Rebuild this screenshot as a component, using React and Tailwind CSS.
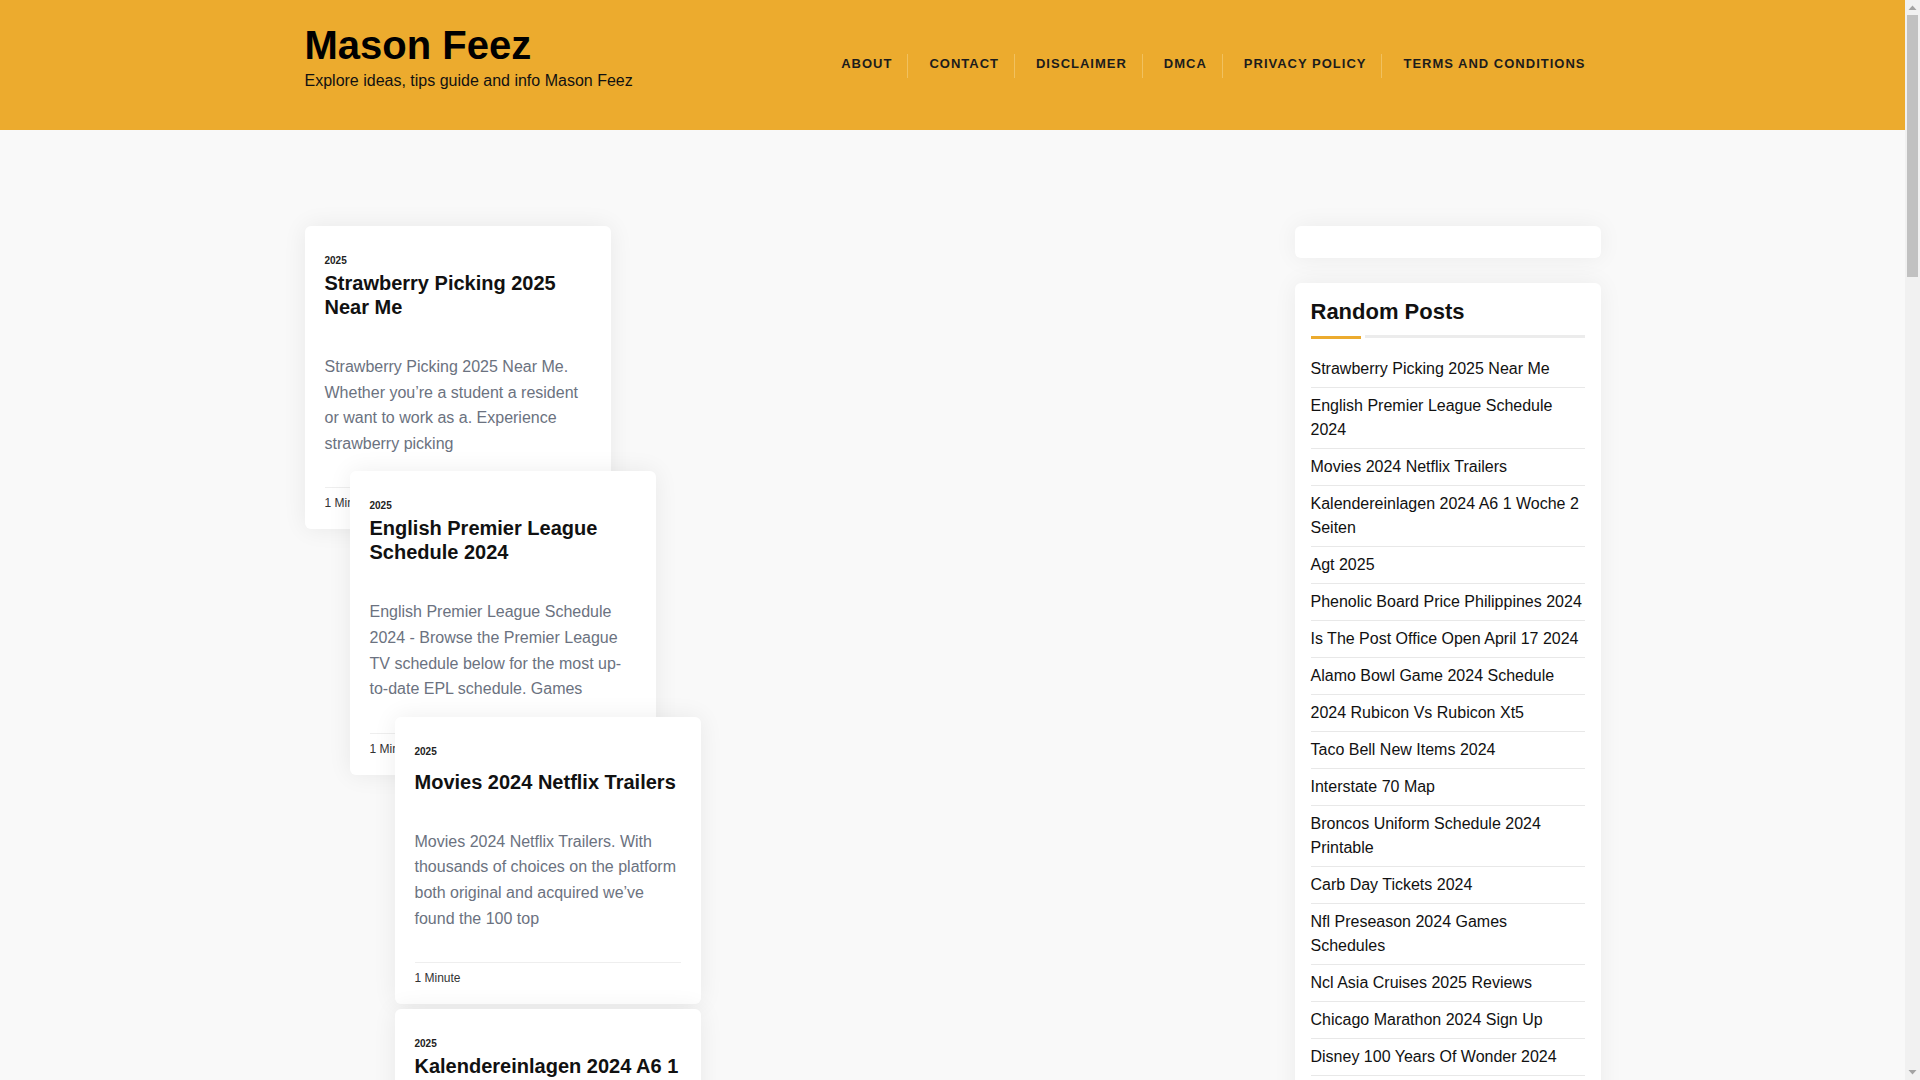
import React from 'react';

const navItems = ['About', 'Contact', 'Disclaimer', 'DMCA', 'Privacy Policy', 'Terms and Conditions'];

const posts = [
  {
    id: 1,
    title: 'Strawberry Picking 2025 Near Me',
    excerpt:
      'Strawberry Picking 2025 Near Me. Whether you’re a student a resident or want to work as a. Experience strawberry picking',
    shift: 'ml-0',
    titleGap: 'mt-[3px]',
  },
  {
    id: 2,
    title: 'English Premier League Schedule 2024',
    excerpt:
      'English Premier League Schedule 2024 - Browse the Premier League TV schedule below for the most up-to-date EPL schedule. Games',
    shift: 'ml-[45px] -mt-[58px]',
    titleGap: 'mt-[3px]',
  },
  {
    id: 3,
    title: 'Movies 2024 Netflix Trailers',
    excerpt:
      'Movies 2024 Netflix Trailers. With thousands of choices on the platform both original and acquired we’ve found the 100 top',
    shift: 'ml-[90px] -mt-[58px]',
    titleGap: 'mt-[11px]',
  },
  {
    id: 4,
    title: 'Kalendereinlagen 2024 A6 1 Woche 2 Seiten',
    excerpt:
      'Kalendereinlagen 2024 A6 1 Woche 2 Seiten. Kalendereinlagen für das neue Jahr zum Ausdrucken und Einlegen in den Planer',
    shift: 'ml-[90px] mt-[5px]',
    titleGap: 'mt-[3px]',
  },
];

const randomPosts = [
  'Strawberry Picking 2025 Near Me',
  'English Premier League Schedule 2024',
  'Movies 2024 Netflix Trailers',
  'Kalendereinlagen 2024 A6 1 Woche 2 Seiten',
  'Agt 2025',
  'Phenolic Board Price Philippines 2024',
  'Is The Post Office Open April 17 2024',
  'Alamo Bowl Game 2024 Schedule',
  '2024 Rubicon Vs Rubicon Xt5',
  'Taco Bell New Items 2024',
  'Interstate 70 Map',
  'Broncos Uniform Schedule 2024 Printable',
  'Carb Day Tickets 2024',
  'Nfl Preseason 2024 Games Schedules',
  'Ncl Asia Cruises 2025 Reviews',
  'Chicago Marathon 2024 Sign Up',
  'Disney 100 Years Of Wonder 2024',
  'Easter Sunday 2025 Date',
  'Nba Draft 2024 Mock',
];

const PostCard = ({ post }) => (
  <article
    className={`relative w-[306px] bg-white rounded-md shadow-[0_0_24px_rgba(0,0,0,0.07)] px-5 pt-[27px] pb-[17px] ${post.shift}`}
  >
    <div className="text-[10px] font-bold leading-[15px] text-[#222]">2025</div>
    <h2 className={`${post.titleGap} text-[20px] font-bold leading-[24px] text-[#111]`}>{post.title}</h2>
    <p className="mt-[35px] text-[16px] leading-[25.6px] text-[#6b7280]">{post.excerpt}</p>
    <div className="mt-[31px] border-t border-[#eeeeee] pt-[6px] text-[12px] leading-[18px] text-[#333]">
      1 Minute
    </div>
  </article>
);

// window scrollbar as it shows in the screenshot
const Scrollbar = () => (
  <div className="fixed top-0 right-0 h-screen w-[15px] bg-[#f1f1f1] flex flex-col items-center">
    <svg width="15" height="15" viewBox="0 0 15 15" className="shrink-0">
      <path d="M3.5 10 L7.5 5.5 L11.5 10 Z" fill="#a3a3a3" />
    </svg>
    <div className="w-[11px] h-[262px] bg-[#c1c1c1]" />
    <div className="flex-1" />
    <svg width="15" height="15" viewBox="0 0 15 15" className="shrink-0">
      <path d="M3.5 5 L7.5 9.5 L11.5 5 Z" fill="#a3a3a3" />
    </svg>
  </div>
);

const App = () => {
  return (
    <div className="min-h-screen pr-[15px] bg-[#f9f9f9] font-['Liberation_Sans',Arial,sans-serif]">
      {/* Header */}
      <header className="bg-[#ecab2e] h-[130px]">
        <div className="max-w-[1296px] mx-auto flex justify-between items-start">
          <div className="pt-[21px]">
            <h1 className="text-[40px] font-bold leading-[48px] text-black">Mason Feez</h1>
            <p className="text-[16px] leading-[24px] text-[#111]">Explore ideas, tips guide and info Mason Feez</p>
          </div>
          <nav className="pt-[54px]">
            <ul className="flex">
              {navItems.map((item, i) => (
                <li
                  key={item}
                  className={`h-[24px] pl-[21px] pr-[15px] text-[13px] font-bold uppercase tracking-[1px] leading-[20px] text-[#1c1c1c] ${
                    i > 0 ? 'border-l border-[#f1c15f]' : ''
                  }`}
                >
                  {item}
                </li>
              ))}
            </ul>
          </nav>
        </div>
      </header>

      {/* Content */}
      <div className="max-w-[1296px] mx-auto flex justify-between pt-[96px] pb-10">
        <main className="flex flex-col items-start">
          {posts.map((post) => (
            <PostCard key={post.id} post={post} />
          ))}
        </main>

        <aside className="w-[306px] shrink-0">
          <div className="h-[32px] bg-white rounded-md shadow-[0_0_24px_rgba(0,0,0,0.06)]" />
          <div className="mt-[25px] bg-white rounded-md shadow-[0_0_24px_rgba(0,0,0,0.06)] px-4 pt-4 pb-4">
            <h3 className="text-[22px] font-bold leading-[26px] text-[#111]">Random Posts</h3>
            <div className="mt-[10px] flex items-start h-[4px]">
              <div className="mt-[1px] h-[3px] w-[50px] bg-[#ecab2e]" />
              <div className="ml-[4px] h-[3px] flex-1 bg-[#ececec]" />
            </div>
            <ul className="mt-3">
              {randomPosts.map((title) => (
                <li key={title} className="py-1.5 border-b border-[#e8e8e8] text-[16px] leading-[24px] text-[#111]">
                  {title}
                </li>
              ))}
            </ul>
          </div>
        </aside>
      </div>

      <Scrollbar />
    </div>
  );
};

export default App;
